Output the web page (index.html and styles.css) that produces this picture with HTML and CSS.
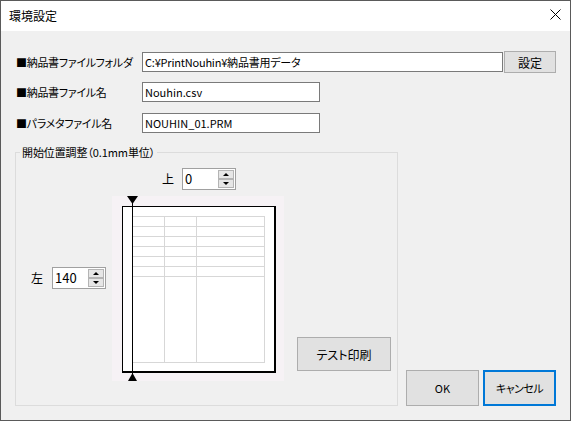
FILE: index.html
```html
<!DOCTYPE html>
<html lang="ja">
<head>
<meta charset="utf-8">
<title>環境設定</title>
<link rel="stylesheet" href="styles.css">
</head>
<body>
<div class="window">
  <div class="titlebar">
    <span class="title">環境設定</span>
    <svg class="close" width="11" height="11" viewBox="0 0 11 11"><path d="M0.5 0.5 L10.5 10.5 M10.5 0.5 L0.5 10.5" stroke="#000" stroke-width="1" fill="none"/></svg>
  </div>
  <div class="content">
    <div class="row">
      <span class="lbl">■納品書ファイルフォルダ</span>
      <div class="input wide">C:¥PrintNouhin¥納品書用データ</div>
      <button class="btn browse">設定</button>
    </div>
    <div class="row r2">
      <span class="lbl">■納品書ファイル名</span>
      <div class="input short">Nouhin.csv</div>
    </div>
    <div class="row r3">
      <span class="lbl">■パラメタファイル名</span>
      <div class="input short">NOUHIN_01.PRM</div>
    </div>
    <div class="bottom">
      <fieldset class="group">
        <legend class="legend">開始位置調整（0.1mm単位）</legend>
        <div class="layout">
          <div class="spin-group top-spin">
            <span class="spin-lbl">上</span>
            <div class="spin">
              <span class="spin-val">0</span>
              <div class="spin-btns">
                <span class="sb"><i class="tri up"></i></span>
                <span class="sb"><i class="tri down"></i></span>
              </div>
            </div>
          </div>
          <div class="spin-group left-spin">
            <span class="spin-lbl">左</span>
            <div class="spin">
              <span class="spin-val">140</span>
              <div class="spin-btns">
                <span class="sb"><i class="tri up"></i></span>
                <span class="sb"><i class="tri down"></i></span>
              </div>
            </div>
          </div>
          <svg class="diagram" width="172" height="185" viewBox="0 0 172 185">
            <rect x="0" y="0" width="172" height="185" fill="#f6f2f5"/>
            <rect x="10" y="10" width="154" height="167" fill="#fff"/>
            <g stroke="#d7d7d7" stroke-width="1" fill="none">
              <path d="M20 20.5H152.5 M20 30.5H152.5 M20 40.5H152.5 M20 50.5H152.5 M20 60.5H152.5 M20 70.5H152.5 M20 80.5H152.5 M20 166.5H152.5"/>
              <path d="M52.5 20V167 M84.5 20V167 M152.5 20V167"/>
            </g>
            <g fill="#000">
              <rect x="10" y="10" width="154" height="1"/>
              <rect x="10" y="10" width="1" height="167"/>
              <rect x="162" y="10" width="2" height="167"/>
              <rect x="10" y="175" width="154" height="2"/>
              <rect x="20" y="0" width="1" height="185"/>
              <polygon points="15,0 26,0 20.5,8"/>
              <polygon points="16,185 25,185 20.5,177"/>
            </g>
          </svg>
          <div class="side">
            <button class="btn test">テスト印刷</button>
          </div>
        </div>
      </fieldset>
      <div class="actions">
        <button class="btn dlg">OK</button>
        <button class="btn dlg default">キャンセル</button>
      </div>
    </div>
  </div>
</div>
</body>
</html>
```

FILE: styles.css
```css
* { box-sizing: border-box; }

html, body {
  margin: 0;
  padding: 0;
  background: #ffffff;
}

body {
  font-family: "Noto Sans CJK JP", "Noto Sans", sans-serif;
  font-size: 12px;
  color: #000;
}

.window {
  width: 571px;
  height: 421px;
  border: 1px solid #5a5a5a;
  background: #f0f0f0;
  display: flex;
  flex-direction: column;
}

.titlebar {
  height: 30px;
  background: #fff;
  display: flex;
  align-items: center;
  padding: 0 9px 1px 8px;
  flex: none;
}

.title {
  font-size: 12px;
  line-height: 16px;
}

.close {
  margin-left: auto;
  display: block;
  margin-top: -2px;
}

.content {
  flex: 1;
  padding: 20px 14px 14px 14px;
  display: flex;
  flex-direction: column;
}

.row {
  height: 22px;
  display: flex;
  align-items: center;
}

.r2 { margin-top: 8px; }
.r3 { margin-top: 9px; }

.lbl {
  width: 127px;
  flex: none;
  font-size: 11px;
  letter-spacing: -0.3px;
  font-feature-settings: "palt";
  line-height: 16px;
  white-space: nowrap;
  padding-left: 1px;
}

.input {
  height: 20px;
  border: 1px solid #7a7a7a;
  background: #fff;
  padding: 0 2px;
  font-size: 11px;
  line-height: 18px;
  white-space: nowrap;
  overflow: hidden;
  font-feature-settings: "palt";
}

.wide {
  width: 361px;
  letter-spacing: -0.2px;
}

.short { width: 178px; }

.btn {
  font-family: inherit;
  font-size: 11px;
  color: #000;
  background: #e1e1e1;
  border: 1px solid #adadad;
  padding: 0;
  margin: 0;
  font-feature-settings: "palt";
}

.browse {
  width: 52px;
  height: 22px;
  margin-left: 1px;
  font-size: 12px;
}

.bottom {
  margin-top: 10px;
  display: flex;
  align-items: flex-end;
}

.group {
  margin: 0;
  padding: 8px 0 24px 0;
  border: 1px solid #dcdcdc;
  width: 383px;
  min-width: 0;
}

.legend {
  margin-left: 4px;
  padding: 0 2px;
  font-size: 11px;
  letter-spacing: -0.1px;
  line-height: 16px;
  font-feature-settings: "palt";
}

.layout {
  display: grid;
  grid-template-columns: 96px 172px 1fr;
  grid-template-rows: 22px 185px;
  row-gap: 6px;
}

.spin-group {
  display: flex;
  align-items: center;
}

.top-spin {
  grid-column: 2;
  grid-row: 1;
  justify-content: center;
  gap: 8px;
  padding-left: 2px;
}

.left-spin {
  grid-column: 1;
  grid-row: 2;
  justify-self: end;
  align-self: start;
  margin-top: 71px;
  margin-right: 6px;
  gap: 9px;
}

.spin-lbl {
  line-height: 16px;
  font-size: 12px;
}

.spin {
  width: 54px;
  height: 22px;
  border: 1px solid #a0a0a0;
  background: #fff;
  display: flex;
  align-items: center;
  padding: 0 1px 0 2px;
}

.spin-val {
  flex: 1;
  font-size: 13px;
  line-height: 16px;
}

.spin-btns {
  width: 16px;
  height: 18px;
  display: flex;
  flex-direction: column;
}

.sb {
  flex: 1;
  border: 1px solid #b4b4b4;
  background: #e6e6e6;
  display: flex;
  align-items: center;
  justify-content: center;
}

.tri {
  display: block;
  width: 0;
  height: 0;
  border-left: 3px solid transparent;
  border-right: 3px solid transparent;
}

.tri.up { border-bottom: 3px solid #000; }
.tri.down { border-top: 3px solid #000; }

.diagram {
  grid-column: 2;
  grid-row: 2;
  display: block;
}

.side {
  grid-column: 3;
  grid-row: 2;
  display: flex;
  align-items: flex-end;
  padding: 0 0 10px 13px;
}

.test {
  width: 94px;
  height: 34px;
  font-size: 12px;
}

.actions {
  margin-left: auto;
  display: flex;
  gap: 4px;
}

.dlg {
  width: 73px;
  height: 36px;
}

.dlg.default {
  border: 2px solid #0078d7;
  letter-spacing: -0.5px;
}
```
